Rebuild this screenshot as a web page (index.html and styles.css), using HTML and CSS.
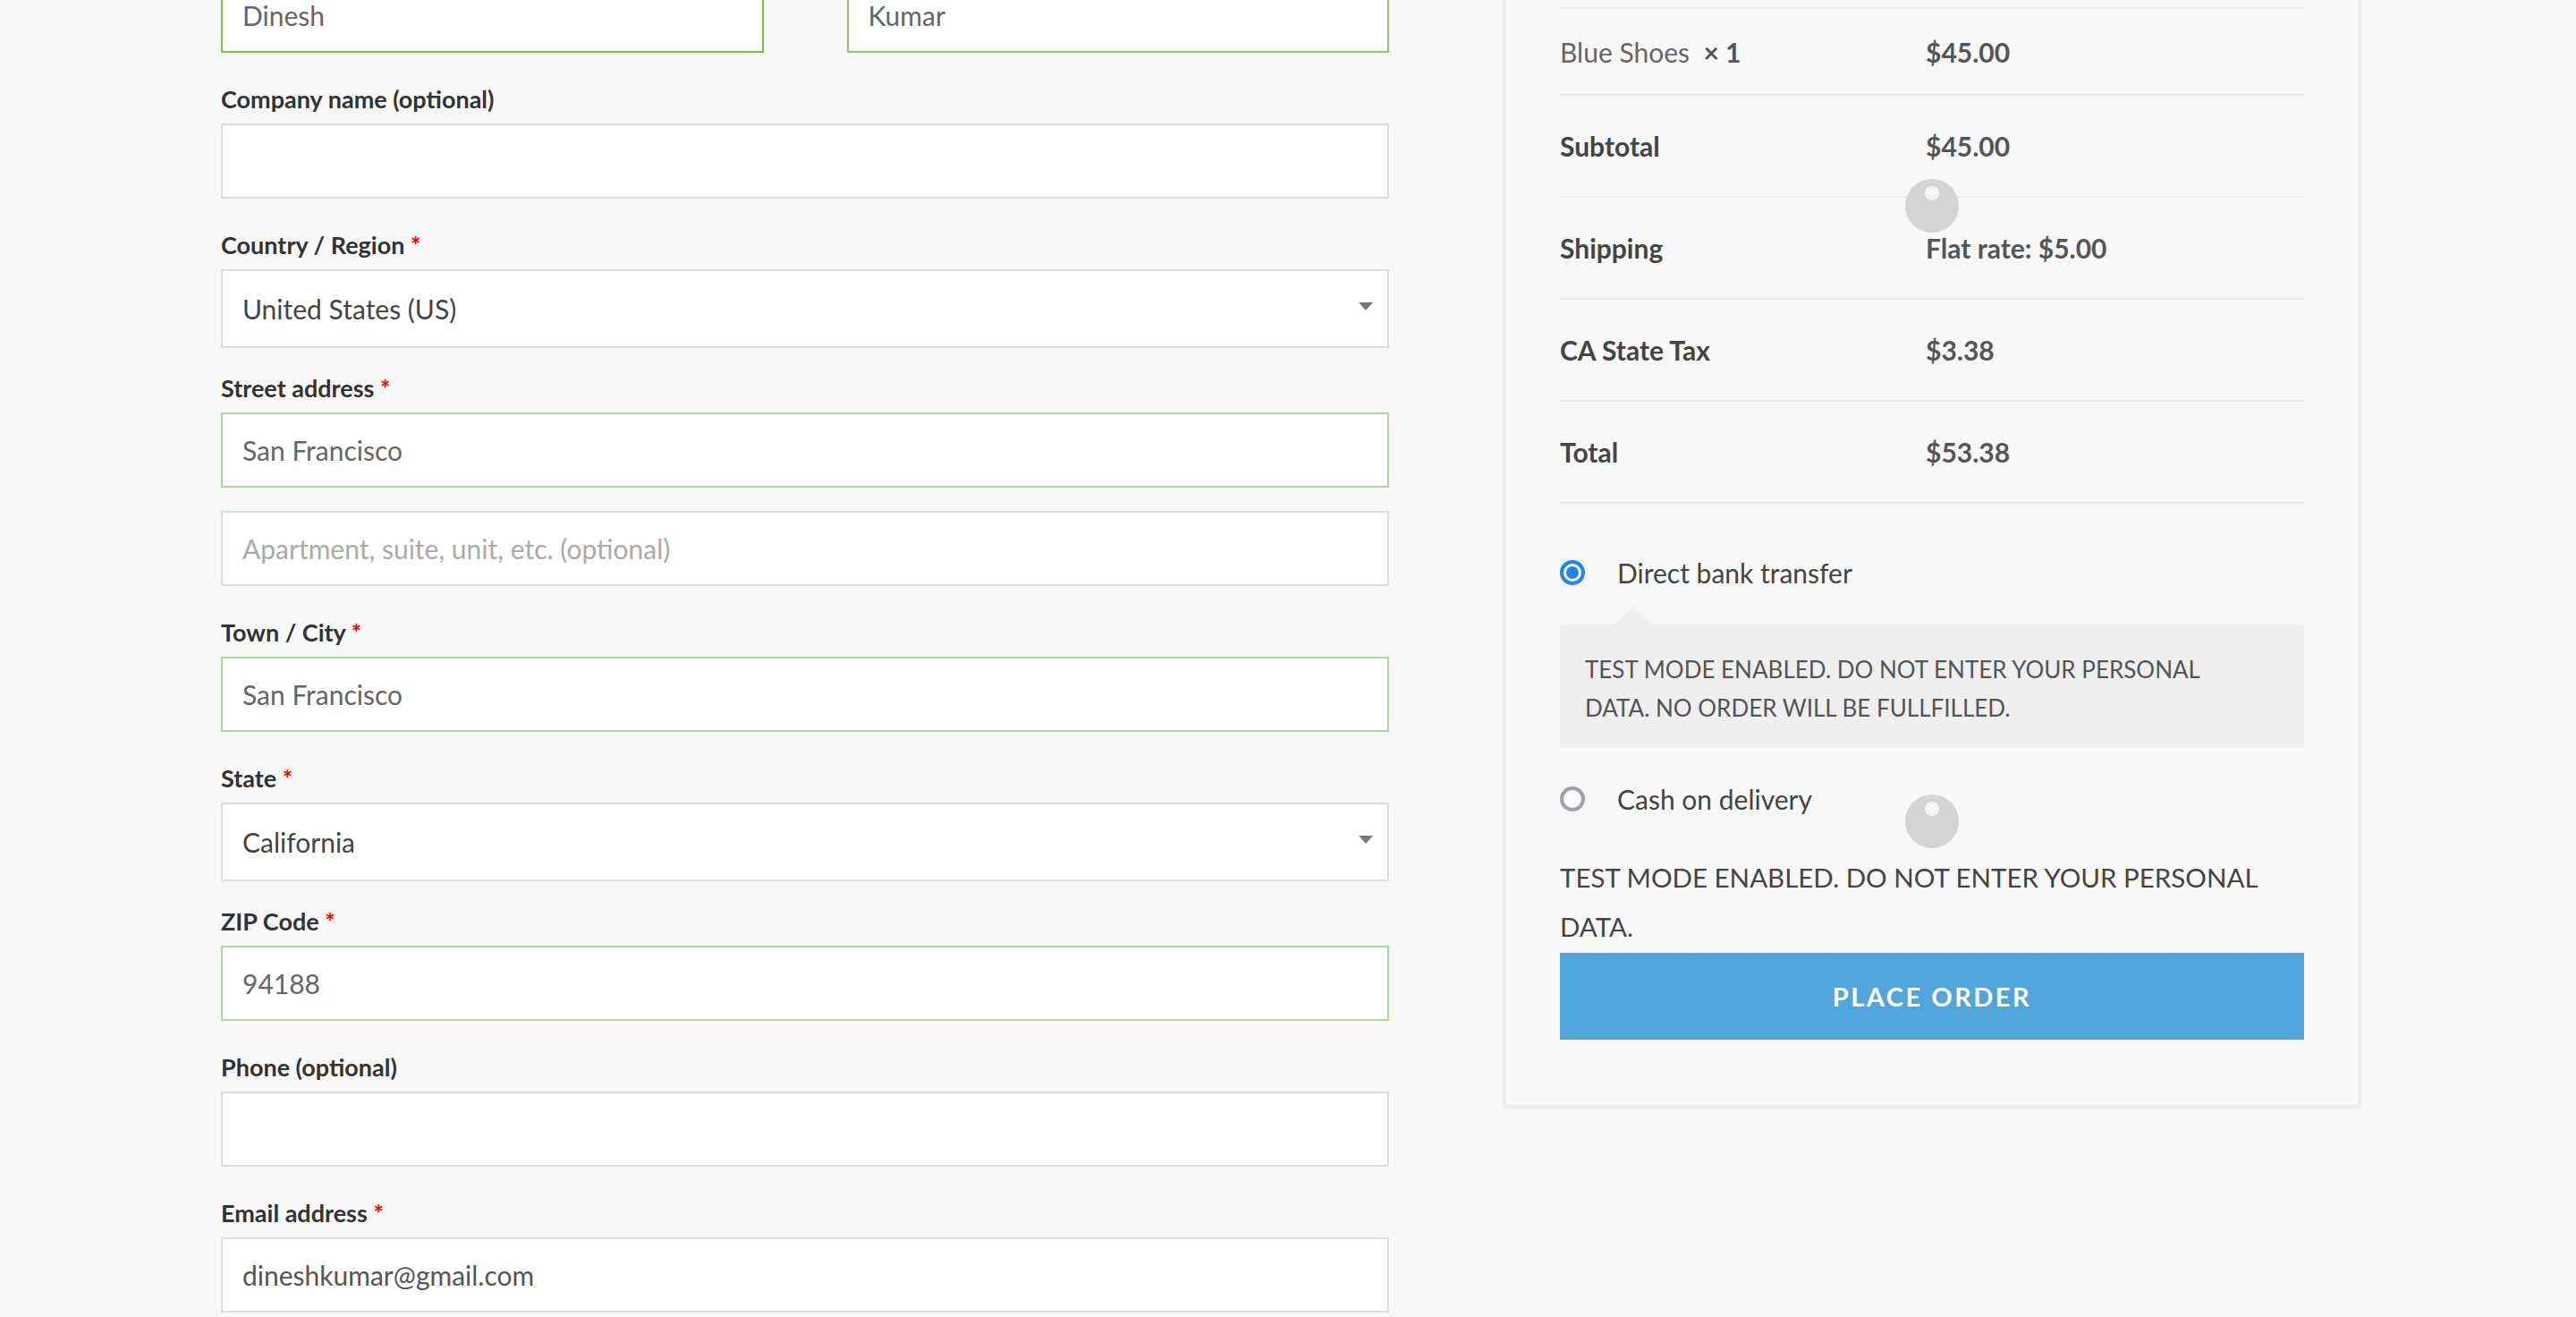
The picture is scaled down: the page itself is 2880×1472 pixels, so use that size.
FILE: index.html
```html
<!DOCTYPE html>
<html lang="en">
<head>
<meta charset="utf-8">
<title>Checkout</title>
<link rel="stylesheet" href="styles.css">
</head>
<body>
<div class="page">
  <form class="billing">
    <div class="names">
      <input class="input valid-a" type="text" value="Dinesh" readonly>
      <input class="input valid-b" type="text" value="Kumar" readonly>
    </div>

    <div class="field">
      <label class="label">Company name (optional)</label>
      <input class="input" type="text" value="" readonly>
    </div>

    <div class="field field-select">
      <label class="label">Country / Region <abbr class="req">*</abbr></label>
      <div class="select"><span>United States (US)</span><span class="caret"></span></div>
    </div>

    <div class="field">
      <label class="label">Street address <abbr class="req">*</abbr></label>
      <input class="input valid" type="text" value="San Francisco" readonly>
      <input class="input input-second" type="text" placeholder="Apartment, suite, unit, etc. (optional)" readonly>
    </div>

    <div class="field">
      <label class="label">Town / City <abbr class="req">*</abbr></label>
      <input class="input valid" type="text" value="San Francisco" readonly>
    </div>

    <div class="field field-select">
      <label class="label">State <abbr class="req">*</abbr></label>
      <div class="select"><span>California</span><span class="caret"></span></div>
    </div>

    <div class="field">
      <label class="label">ZIP Code <abbr class="req">*</abbr></label>
      <input class="input valid" type="text" value="94188" readonly>
    </div>

    <div class="field">
      <label class="label">Phone (optional)</label>
      <input class="input" type="text" value="" readonly>
    </div>

    <div class="field">
      <label class="label">Email address <abbr class="req">*</abbr></label>
      <input class="input input-dark" type="text" value="dineshkumar@gmail.com" readonly>
    </div>
  </form>

  <aside class="order">
    <div class="totals">
      <div class="tr tr-item">
        <div class="item-name">Blue Shoes&nbsp; <strong class="qty">×&nbsp;1</strong></div>
        <div class="amount">$45.00</div>
      </div>
      <div class="tr">
        <div class="th">Subtotal</div>
        <div class="amount">$45.00</div>
      </div>
      <div class="tr">
        <div class="th">Shipping</div>
        <div class="amount">Flat rate: $5.00</div>
      </div>
      <div class="tr">
        <div class="th">CA State Tax</div>
        <div class="amount">$3.38</div>
      </div>
      <div class="tr tr-last">
        <div class="th">Total</div>
        <div class="amount">$53.38</div>
      </div>
    </div>

    <div class="payment">
      <div class="pm-row pm-first">
        <svg class="radio" width="28" height="28" viewBox="0 0 28 28"><circle cx="14" cy="14" r="12" fill="#fff" stroke="#1f87f3" stroke-width="4"/><circle cx="14" cy="14" r="7" fill="#1f87f3"/></svg>
        <span>Direct bank transfer</span>
      </div>
      <div class="pm-box">TEST MODE ENABLED. DO NOT ENTER YOUR PERSONAL DATA. NO ORDER WILL BE FULLFILLED.</div>
      <div class="pm-row pm-second">
        <svg class="radio" width="28" height="28" viewBox="0 0 28 28"><circle cx="14" cy="14" r="12" fill="#fff" stroke="#a1a0ae" stroke-width="4"/></svg>
        <span>Cash on delivery</span>
      </div>
      <p class="notice">TEST MODE ENABLED. DO NOT ENTER YOUR PERSONAL DATA.</p>
      <button class="place" type="button">Place order</button>
    </div>

    <span class="touch touch-1"><span class="touch-dot"></span></span>
    <span class="touch touch-2"><span class="touch-dot"></span></span>
  </aside>
</div>
</body>
</html>
```

FILE: styles.css
```css
* {
  box-sizing: border-box;
}

html, body {
  margin: 0;
  padding: 0;
}

body {
  background: #f8f8f8;
  font-family: "Lato", "Open Sans", "Liberation Sans", sans-serif;
  color: #444;
  overflow: hidden;
  height: 1472px;
}

.page {
  display: flex;
  align-items: flex-start;
  padding-left: 247px;
  gap: 127px;
}

/* ---------- billing form ---------- */
.billing {
  width: 1306px;
  flex: none;
  margin-top: -25px;
}

.names {
  display: grid;
  grid-template-columns: 1fr 1fr;
  column-gap: 93px;
  margin-bottom: 35px;
}

.field {
  margin-bottom: 35px;
}

.field-select {
  margin-bottom: 28px;
}

.label {
  display: block;
  font-weight: 700;
  font-size: 27px;
  line-height: 34px;
  color: #333;
  margin-bottom: 10px;
}

.req {
  color: #f00;
  text-decoration: none;
  border: none;
  font-weight: 700;
}

.input {
  display: block;
  width: 100%;
  height: 84px;
  margin: 0;
  padding: 0 22px;
  border: 2px solid #dddddd;
  background: #fff;
  font-family: inherit;
  font-size: 30px;
  color: #666;
  outline: none;
  border-radius: 0;
}

.input::placeholder {
  color: #aaa;
}

.input-second {
  margin-top: 26px;
}

.input-dark {
  color: #555;
}

.valid-a {
  border-color: #79c144;
}

.valid-b {
  border-color: #8dca67;
}

.valid {
  border-color: #b3d59e;
}

.select {
  display: flex;
  align-items: center;
  justify-content: space-between;
  height: 88px;
  padding: 0 16px 0 22px;
  border: 2px solid #dddddd;
  background: #fff;
  font-size: 30px;
  color: #444;
}

.caret {
  width: 0;
  height: 0;
  border-left: 8px solid transparent;
  border-right: 8px solid transparent;
  border-top: 9px solid #777;
  margin-bottom: 5px;
}

/* ---------- order review ---------- */
.order {
  position: relative;
  width: 960px;
  flex: none;
  margin-top: -42px;
  border: 4px solid #ececec;
  padding: 46px 60px 73px;
}

.totals {
  font-size: 30px;
}

.tr {
  display: grid;
  grid-template-columns: 409px 1fr;
  align-items: center;
  height: 114px;
  border-top: 2px solid #ececec;
}

.tr-item {
  height: 97px;
}

.tr-last {
  height: 116px;
  border-bottom: 2px solid #ececec;
}

.item-name {
  color: #666;
}

.qty {
  color: #555;
  font-weight: 700;
}

.th {
  font-weight: 700;
  color: #444;
}

.amount {
  font-weight: 700;
  color: #555;
}

.payment {
  margin-top: 55px;
}

.pm-row {
  display: flex;
  align-items: center;
  gap: 36px;
  height: 44px;
  font-size: 30px;
  color: #444;
}

.radio {
  flex: none;
  display: block;
}

.pm-box {
  position: relative;
  margin-top: 36px;
  padding: 29px 48px 23px 28px;
  background: #efefef;
  border-radius: 3px;
  font-size: 26px;
  line-height: 43px;
  color: #555;
}

.pm-box::before {
  content: "";
  position: absolute;
  top: -20px;
  left: 61px;
  border-left: 21px solid transparent;
  border-right: 21px solid transparent;
  border-bottom: 20px solid #efefef;
}

.pm-second {
  margin-top: 35px;
}

.notice {
  margin: 38px 0 0;
  font-size: 29.5px;
  line-height: 55px;
  color: #444;
}

.place {
  display: block;
  width: 100%;
  height: 97px;
  margin-top: 2px;
  border: none;
  background: #50a6db;
  color: #fff;
  font-family: inherit;
  font-size: 29px;
  font-weight: 700;
  letter-spacing: 2.5px;
  text-transform: uppercase;
}

/* touch indicators (overlay) */
.touch {
  position: absolute;
  left: 446px;
  width: 60px;
  height: 60px;
  border-radius: 50%;
  background: #d4d4d4;
  display: flex;
  justify-content: center;
}

.touch-1 {
  top: 238px;
}

.touch-2 {
  top: 926px;
}

.touch-dot {
  width: 16px;
  height: 16px;
  margin-top: 8px;
  border-radius: 50%;
  background: #f6f6f6;
}
```
